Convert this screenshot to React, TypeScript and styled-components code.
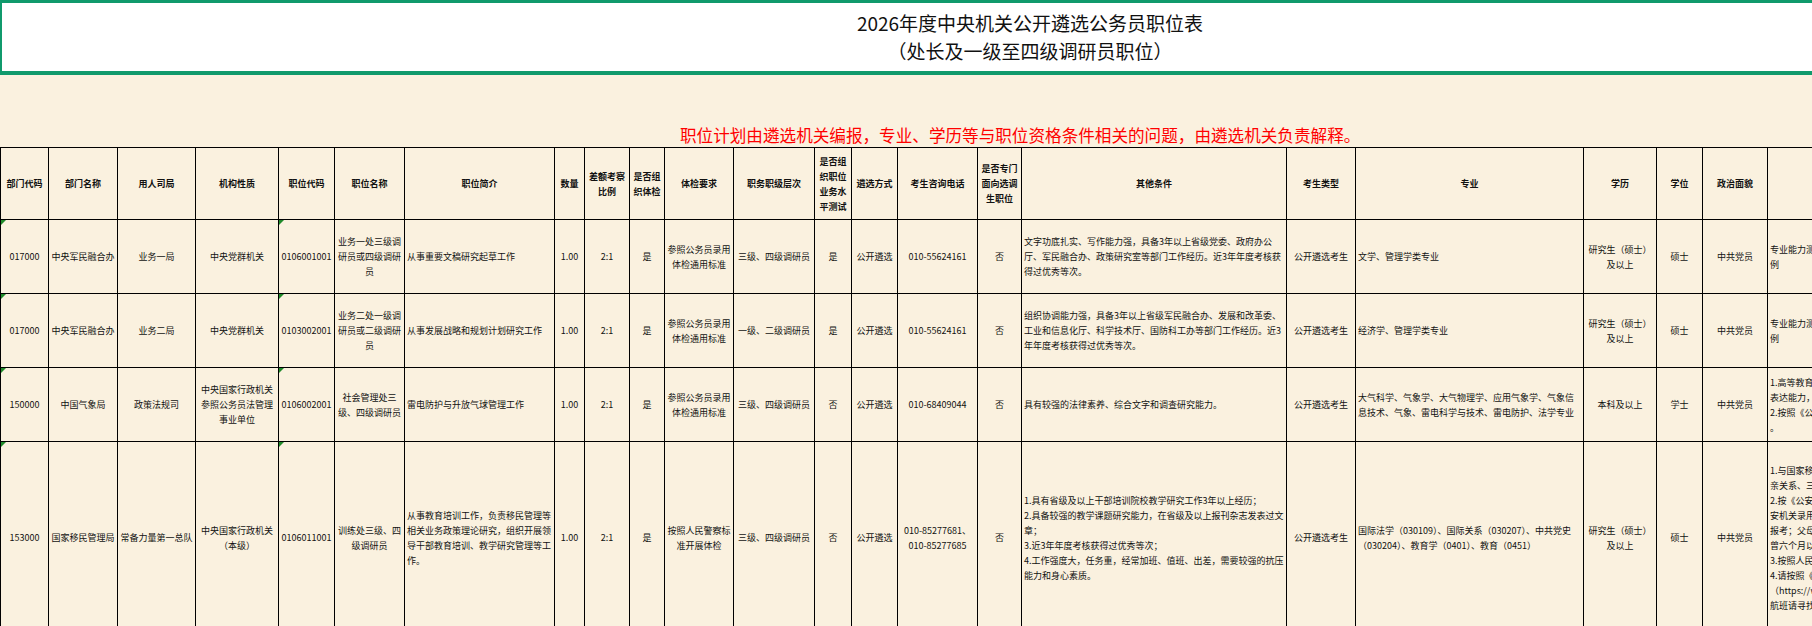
import React from 'react';
import styled, { createGlobalStyle } from 'styled-components';

const Global = createGlobalStyle`
  html, body { margin: 0; padding: 0; background: #faf1df; overflow: hidden; }
  body { width: 1812px; height: 626px; font-family: "Noto Sans CJK SC", "Noto Sans", sans-serif; }
`;

const Page = styled.div`
  width: 1812px;
  height: 626px;
  overflow: hidden;
  background: #faf1df;
`;

const TitleBox = styled.div`
  box-sizing: border-box;
  height: 75px;
  background: #fff;
  border: 2px solid #109a6c;
  border-top-width: 3px;
  border-bottom-width: 4px;
  border-right: none;
  display: flex;
  flex-direction: column;
  align-items: center;
  justify-content: center;
  padding-left: 246px;
  gap: 6px;
  font-family: "Noto Sans CJK SC", serif;
  font-size: 19px;
  line-height: 22px;
  color: #111;
`;

const Note = styled.div`
  height: 72px;
  display: flex;
  align-items: flex-end;
  padding-left: 680px;
  padding-bottom: 1px;
  box-sizing: border-box;
  color: #ff0000;
  font-family: "Noto Sans CJK SC", sans-serif;
  font-size: 16.6px;
  line-height: 22px;
`;

const Table = styled.table`
  border-collapse: collapse;
  table-layout: fixed;
  width: 1967px;
  font-size: 9px;
  line-height: 15px;
  color: #111;
`;

const Th = styled.th`
  border: 1.5px solid #000;
  height: 71px;
  font-weight: 700;
  text-align: center;
  vertical-align: middle;
  padding: 0 2px;
`;

const Td = styled.td<{ $left?: boolean; $mark?: boolean }>`
  position: relative;
  border: 1.5px solid #000;
  text-align: ${p => (p.$left ? 'left' : 'center')};
  vertical-align: middle;
  padding: 0 2px;
  white-space: pre-line;
  overflow: hidden;
  &::before {
    content: '';
    display: ${p => (p.$mark ? 'block' : 'none')};
    position: absolute;
    top: 0;
    left: 0;
    border-top: 5px solid #1f8a2a;
    border-right: 5px solid transparent;
  }
`;

const Tr = styled.tr<{ $h: number }>`
  height: ${p => p.$h}px;
`;

const widths = [48, 69, 78, 83, 56, 70, 150, 30, 45, 35, 69, 81, 37, 46, 80, 44, 265, 69, 228, 73, 46, 65, 200];
const heads = ['部门代码', '部门名称', '用人司局', '机构性质', '职位代码', '职位名称', '职位简介', '数量', '差额考察比例', '是否组织体检', '体检要求', '职务职级层次', '是否组织职位业务水平测试', '遴选方式', '考生咨询电话', '是否专门面向选调生职位', '其他条件', '考生类型', '专业', '学历', '学位', '政治面貌', '备注'];
const leftCols = [6, 16, 18, 22];
const markCols = [0, 4];

const rows: { h: number; c: string[] }[] = [
  { h: 74, c: ['017000', '中央军民融合办', '业务一局', '中央党群机关', '0106001001', '业务一处三级调研员或四级调研员', '从事重要文稿研究起草工作', '1.00', '2:1', '是', '参照公务员录用体检通用标准', '三级、四级调研员', '是', '公开遴选', '010-55624161', '否', '文字功底扎实、写作能力强，具备3年以上省级党委、政府办公厅、军民融合办、政策研究室等部门工作经历。近3年年度考核获得过优秀等次。', '公开遴选考生', '文学、管理学类专业', '研究生（硕士）及以上', '硕士', '中共党员', '专业能力测试内容为综合写作，占综合成绩的比例'] },
  { h: 74, c: ['017000', '中央军民融合办', '业务二局', '中央党群机关', '0103002001', '业务二处一级调研员或二级调研员', '从事发展战略和规划计划研究工作', '1.00', '2:1', '是', '参照公务员录用体检通用标准', '一级、二级调研员', '是', '公开遴选', '010-55624161', '否', '组织协调能力强，具备3年以上省级军民融合办、发展和改革委、工业和信息化厅、科学技术厅、国防科工办等部门工作经历。近3年年度考核获得过优秀等次。', '公开遴选考生', '经济学、管理学类专业', '研究生（硕士）及以上', '硕士', '中共党员', '专业能力测试内容为综合写作，占综合成绩的比例'] },
  { h: 74, c: ['150000', '中国气象局', '政策法规司', '中央国家行政机关参照公务员法管理事业单位', '0106002001', '社会管理处三级、四级调研员', '雷电防护与升放气球管理工作', '1.00', '2:1', '是', '参照公务员录用体检通用标准', '三级、四级调研员', '否', '公开遴选', '010-68409044', '否', '具有较强的法律素养、综合文字和调查研究能力。', '公开遴选考生', '大气科学、气象学、大气物理学、应用气象学、气象信息技术、气象、雷电科学与技术、雷电防护、法学专业', '本科及以上', '学士', '中共党员', '1.高等教育阶段须为全日制\n表达能力，须参加测试\n2.按照《公务员录用规定》\n。'] },
  { h: 192, c: ['153000', '国家移民管理局', '常备力量第一总队', '中央国家行政机关（本级）', '0106011001', '训练处三级、四级调研员', '从事教育培训工作，负责移民管理等相关业务政策理论研究，组织开展领导干部教育培训、教学研究管理等工作。', '1.00', '2:1', '是', '按照人民警察标准开展体检', '三级、四级调研员', '否', '公开遴选', '010-85277681、\n010-85277685', '否', '1.具有省级及以上干部培训院校教学研究工作3年以上经历；\n2.具备较强的教学课题研究能力，在省级及以上报刊杂志发表过文章；\n3.近3年年度考核获得过优秀等次；\n4.工作强度大，任务重，经常加班、值班、出差，需要较强的抗压能力和身心素质。', '公开遴选考生', '国际法学（030109）、国际关系（030207）、中共党史（030204）、教育学（0401）、教育（0451）', '研究生（硕士）及以上', '硕士', '中共党员', '1.与国家移民管理局领导\n亲关系、三代以内旁系\n2.按《公安机关录用人民警察\n安机关录用人民警察体检\n报考；父母、配偶、子女\n曾六个月以上的不得报考\n3.按照人民警察标准开展\n4.请按照《公务员录用\n（https://www.nia.gov.cn）\n航班请寻找报名'] },
];

export default function App() {
  return (
    <Page>
      <Global />
      <TitleBox>
        <div>2026年度中央机关公开遴选公务员职位表</div>
        <div>（处长及一级至四级调研员职位）</div>
      </TitleBox>
      <Note>职位计划由遴选机关编报，专业、学历等与职位资格条件相关的问题，由遴选机关负责解释。</Note>
      <Table>
        <colgroup>
          {widths.map((w, i) => (
            <col key={i} style={{ width: w }} />
          ))}
        </colgroup>
        <thead>
          <tr>
            {heads.map(h => (
              <Th key={h}>{h}</Th>
            ))}
          </tr>
        </thead>
        <tbody>
          {rows.map((r, ri) => (
            <Tr key={ri} $h={r.h}>
              {r.c.map((c, ci) => (
                <Td key={ci} $left={leftCols.includes(ci)} $mark={markCols.includes(ci)}>
                  {c}
                </Td>
              ))}
            </Tr>
          ))}
        </tbody>
      </Table>
    </Page>
  );
}
